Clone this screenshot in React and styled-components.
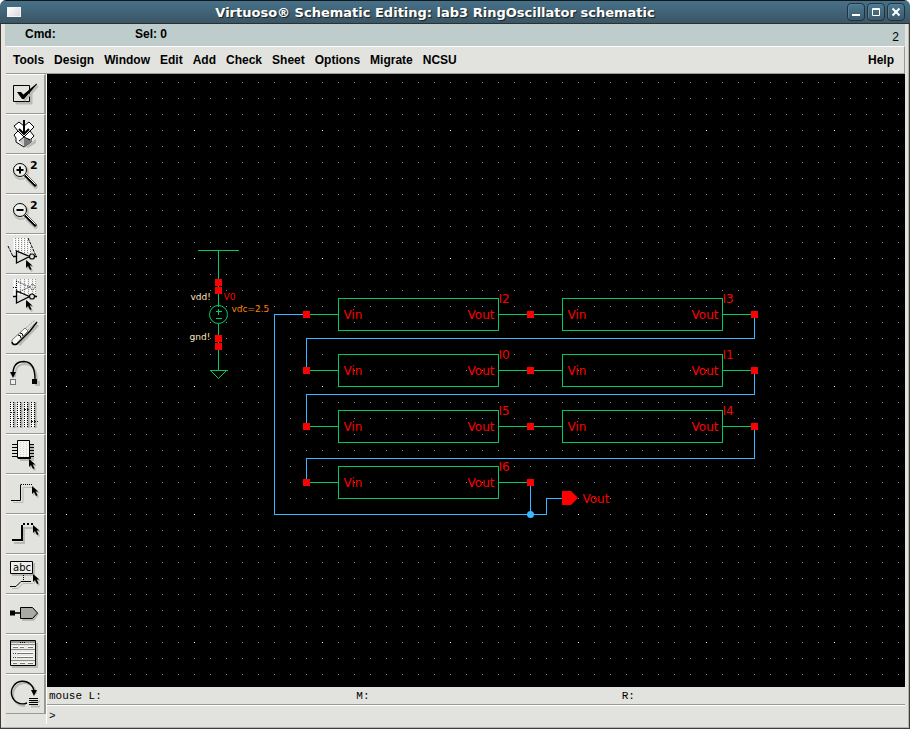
import React from 'react';
import styled, { createGlobalStyle } from 'styled-components';

const GlobalStyle = createGlobalStyle`
  * {
    box-sizing: border-box;
  }
  body {
    margin: 0;
    background: #fff;
    color: #000;
    font-family: "Liberation Sans", Arial, sans-serif;
    font-size: 12px;
  }
`;

const Window = styled.div`
  display: flex;
  flex-direction: column;
  min-height: 100vh;
  background: #e2e3df;
  border-radius: 6px 6px 0 0;
  overflow: hidden;
`;

const TitleBar = styled.header`
  display: flex;
  align-items: center;
  gap: 2px;
  height: 24px;
  padding: 0 5px 0 7px;
  background: linear-gradient(#467189, #3c5563);
  border-top: 1px solid #10181c;
  border-bottom: 1px solid #263238;
`;

const AppIcon = styled.span`
  width: 14px;
  height: 10px;
  background: linear-gradient(135deg, #fff, #d8d8d8);
  border: 1px solid #f4f4f4;
`;

const Title = styled.h1`
  flex: 1;
  margin: 0;
  padding-left: 2px;
  text-align: center;
  color: #fff;
  font: bold 13px "DejaVu Sans", sans-serif;
  white-space: nowrap;
  text-shadow: 1px 1px 1px #182024;
`;

const TitleButton = styled.button`
  width: 18px;
  height: 18px;
  padding: 0;
  border: 1px solid #22313a;
  border-radius: 4px;
  background: linear-gradient(#4b7a93, #3d5a69);
  box-shadow: inset 1px 1px 0 #54849c;
  svg {
    display: block;
  }
`;

const Frame = styled.div`
  flex: 1;
  display: flex;
  flex-direction: column;
  padding: 0 4px 1px;
  border: solid #3c3c3a;
  border-width: 0 1px 1px;
  box-shadow: inset -1px -1px 0 #b4b4b0, inset 4px 0 0 #e9e5e1;
`;

const Banner = styled.div`
  display: flex;
  height: 22px;
  padding: 0 6px 0 20px;
  background: #becccb;
  font-weight: bold;
  line-height: 20px;
`;

const BannerField = styled.span`
  width: 110px;
`;

const WindowNumber = styled.span`
  margin-left: auto;
  font-weight: normal;
  line-height: 26px;
`;

const MenuBar = styled.nav`
  display: flex;
  align-items: center;
  height: 28px;
  margin-left: 1px;
  padding: 0 5px 0 2px;
  border-top: 1px solid #fff;
  border-right: 1px solid #999a95;
  border-bottom: 1px solid #999a95;
`;

const MenuItem = styled.button`
  padding: 0 5px;
  border: none;
  background: none;
  color: inherit;
  font: bold 12px "Liberation Sans", Arial, sans-serif;
  &:last-child {
    margin-left: auto;
  }
`;

const Main = styled.div`
  flex: 1;
  display: flex;
`;

const ToolBar = styled.div`
  flex: none;
  width: 41px;
  margin: 0 0 3px 1px;
  border-right: 1px solid #fff;
`;

const ToolButton = styled.button`
  display: block;
  width: 40px;
  height: 40px;
  padding: 0;
  border: solid #999a95;
  border-width: 1px 2px 1px 0;
  border-top-color: #fff;
  background: #e2e3df;
  svg {
    display: block;
  }
`;

const WorkArea = styled.div`
  flex: 1;
  display: flex;
  flex-direction: column;
  min-width: 0;
`;

const Canvas = styled.svg`
  flex: 1;
  display: block;
  width: 100%;
  min-height: 480px;
  background: #000;
  font: 12px "DejaVu Sans", sans-serif;
`;

const MouseLine = styled.div`
  display: grid;
  grid-template-columns: 308fr 266fr 284fr;
  height: 18px;
  padding-left: 2px;
  border-bottom: 1px solid #999a95;
  font: 11px/18px "Liberation Mono", monospace;
`;

const Prompt = styled.label`
  display: flex;
  height: 22px;
  padding-left: 2px;
  border-top: 1px solid #fff;
  font: 11px/20px "Liberation Mono", monospace;
`;

const PromptInput = styled.input`
  flex: 1;
  min-width: 0;
  padding: 0 4px;
  border: none;
  outline: none;
  background: transparent;
  font: inherit;
`;

const GREEN = '#00cc66';
const BLUE = '#38b8ff';
const RED = '#ff0000';
const SHADE = '#b9bab5';

const MENUS = ['Tools', 'Design', 'Window', 'Edit', 'Add', 'Check', 'Sheet', 'Options', 'Migrate', 'NCSU', 'Help'];

const Cursor = ({ x, y }) => (
  <g transform={`translate(${x} ${y})`}>
    <path d="M1 1v9l2-2 2 4 2-1-2-4h3z" fill={SHADE} />
    <path d="M0 0v8l2-2 2 4 1.6-.8-2-3.6h2.8z" fill="#000" />
  </g>
);

const Lens = ({ plus }) => (
  <>
    <path d="M21 24l10 9" stroke={SHADE} strokeWidth="4" />
    <circle cx="15" cy="17" r="7" stroke={SHADE} strokeWidth="2" fill="none" />
    <circle cx="14" cy="15" r="6.5" stroke="#000" fill="#ecece9" />
    <path d="M9 15a5 5 0 0 1 5-5" stroke="#fff" fill="none" />
    <path d="M19 20l11 11" stroke="#000" strokeWidth="3" />
    <path d="M19.5 19.5l10 10" stroke="#fff" />
    <path d={plus ? 'M10.5 15h7M14 11.5v7' : 'M10.5 15h7'} stroke="#000" strokeWidth="2" />
    <text x="24" y="14" fontSize="11" fontWeight="bold" fontFamily="DejaVu Sans">2</text>
  </>
);

const Inverter = () => (
  <>
    <path d="M10.5 16v12l13-6.5zM7 21.5h3.5M29 21.5h2" stroke="#000" fill="none" strokeWidth="1.3" />
    <circle cx="26" cy="21.5" r="2.5" stroke="#000" fill="#e2e3df" strokeWidth="1.2" />
    <Cursor x={20} y={25} />
  </>
);

const TOOLS = [
  {
    name: 'Check and Save',
    icon: (
      <>
        <path d="M9.5 12.5h17v17h-17z" fill={SHADE} />
        <path d="M7.5 10.5h16v16h-16z" fill="#e2e3df" stroke="#000" />
        <path d="M13 19l6 6 13-14" stroke={SHADE} strokeWidth="2" fill="none" />
        <path d="M11 17h4l2.500 2.500L30.500 8.500l.5 1L18 24h-2z" fill="#000" />
      </>
    ),
  },
  {
    name: 'Save',
    icon: (
      <>
        <path d="M20 32l10-8v4l-8 5z" fill={SHADE} />
        <path d="M13 7l5 4 5-4 5 5-4 4 4 5-3 3v3l-7 5-8-5v-4l-2-3 4-4-4-5z" fill="#fff" stroke="#000" />
        <path d="M18 32v-9l8 1v3z" fill="#777" />
        <path d="M10 24l8 7v-9l-5 4z" fill="#c8c8c4" />
        <path d="M12 16l6 6 6-6M13 26l5-4 6 3" stroke="#000" fill="none" />
        <path d="M18 5v14M13 14l5 5 5-5" stroke="#000" strokeWidth="2" fill="none" />
      </>
    ),
  },
  { name: 'Zoom In by 2', icon: <Lens plus /> },
  { name: 'Zoom Out by 2', icon: <Lens /> },
  {
    name: 'Stretch',
    icon: (
      <>
        <path d="M8.500 3v14M11.500 3v15M14.500 3v15M17.500 3v15M20.500 3v15M23.500 8v10" stroke="#fff" strokeWidth="2" />
        <path d="M9.500 3v14M12.500 3v15M15.500 3v16M18.500 3v16M21.500 5v14M24.500 12v7" stroke="#888" strokeDasharray="1 1" />
        <path d="M2 11l5 10.500M22 3l8 18" stroke="#000" strokeDasharray="3 1" />
        <Inverter />
      </>
    ),
  },
  {
    name: 'Copy',
    icon: (
      <>
        <path d="M8.500 4v18M12.500 4v16M16.500 4v16M20.500 4v16M24.500 4v16M28.500 4v16" stroke="#fff" strokeWidth="2" />
        <path d="M10.500 4v16M14.500 4v16M18.500 4v16M22.500 4v16M26.500 4v16M29.500 4v18" stroke="#999" strokeDasharray="1 1" />
        <path d="M10.500 6v12l13-6zM7 12.500h3M24 12a2.500 2.500 0 1 1 5 0 2.500 2.500 0 1 1-5 0" stroke="#111" strokeDasharray="1 1" fill="none" />
        <Inverter />
      </>
    ),
  },
  {
    name: 'Delete',
    icon: (
      <>
        <path d="M13 30L32 10" stroke={SHADE} strokeWidth="3" />
        <path d="M6 25L19 13l3 3L10 29H6z" fill="#f8f8f6" stroke="#777" />
        <path d="M6 27q1 4 5 2L24 16l7-9" stroke="#000" strokeWidth="1.400" fill="none" />
        <path d="M20 13l9-8M22 15l9-9" stroke="#999" strokeDasharray="2 1" />
        <path d="M12 20q3 0 3 3M14 18q3 0 3 3" stroke="#000" fill="none" />
      </>
    ),
  },
  {
    name: 'Undo',
    icon: (
      <>
        <path d="M9 22Q9 9 19 9 31 10 31 26" stroke={SHADE} strokeWidth="2" fill="none" />
        <path d="M7 19Q7 6.500 18 6.500 29 7 29 24" stroke="#000" strokeWidth="1.400" fill="none" />
        <path d="M4 17h6l-3 6z" fill="#000" />
        <path d="M29 26h5v5h-5z" fill={SHADE} />
        <path d="M26 24h5v5h-5z" fill="#000" />
        <path d="M4.500 24.500h5v5h-5z" stroke="#000" strokeDasharray="1 1" fill="#eee" />
      </>
    ),
  },
  {
    name: 'Property',
    icon: (
      <>
        <path d="M5.500 8v24M12.500 8v24M19.500 8v24M26.500 8v24" stroke="#fff" strokeWidth="2" />
        <path d="M8.500 7v26M15.500 7v26M22.500 7v26M29.500 7v26" stroke="#aaa" strokeWidth="2" />
        <path d="M4.500 7v26M7.500 7v26M11.500 7v26M14.500 7v26M18.500 7v26M21.500 7v26M25.500 7v26M28.500 7v26" stroke="#000" strokeDasharray="1 1" />
        <path d="M4 17.500h6M11 23.500h6M18 14.500h6M25 26.500h7" stroke="#222" strokeDasharray="2 1" />
      </>
    ),
  },
  {
    name: 'Component',
    icon: (
      <>
        <path d="M14 9h14v17H14z" fill={SHADE} />
        <path d="M6 9.500h22M6 12.500h22M6 15.500h22M6 18.500h22M6 21.500h22" stroke="#000" />
        <path d="M11.500 5.500h12v17h-12z" fill="#f4f4f1" stroke="#000" />
        <path d="M11 22h14v2H12z" fill="#000" />
        <path d="M14.500 7v15M17.500 7v15M20.500 7v15" stroke="#d6d6d2" strokeDasharray="1 1" />
        <Cursor x={23} y={24} />
      </>
    ),
  },
  {
    name: 'Wire (narrow)',
    icon: (
      <>
        <path d="M7 27.500h10v-15h9" stroke={SHADE} fill="none" />
        <path d="M5 25.500h9.500v-16" stroke="#000" fill="none" />
        <path d="M15 9.500h12" stroke="#000" strokeDasharray="1 1" />
        <Cursor x={26} y={11} />
      </>
    ),
  },
  {
    name: 'Wire (wide)',
    icon: (
      <>
        <path d="M8 28h10V13h9" stroke={SHADE} fill="none" strokeWidth="2" />
        <path d="M6 25h10V10" stroke="#000" fill="none" strokeWidth="2" />
        <path d="M17 9h10" stroke="#000" strokeWidth="2" strokeDasharray="2 2" />
        <Cursor x={27} y={10} />
      </>
    ),
  },
  {
    name: 'Wire Name',
    icon: (
      <>
        <path d="M6 8h23v13H6z" fill={SHADE} />
        <path d="M4.500 6.500h22v12h-22z" fill="#eeeeeb" stroke="#000" />
        <text x="7" y="16" fontSize="10" fontFamily="DejaVu Sans">abc</text>
        <path d="M17.500 20v6" stroke="#000" strokeDasharray="1 1" />
        <path d="M6 33.500h6l5-5h10" stroke={SHADE} fill="none" />
        <path d="M4 31.500h6l5-5h10" stroke="#000" fill="none" />
        <Cursor x={27} y={19} />
      </>
    ),
  },
  {
    name: 'Pin',
    icon: (
      <>
        <path d="M16 14h12l5 5-5 7H16z" fill={SHADE} />
        <path d="M14.500 12.500h12l5 5.500-5 5.500h-12z" fill="#a9aaa5" stroke="#000" />
        <path d="M4 15.500h5v5H4z" fill="#000" />
        <path d="M9 18h5" stroke="#000" strokeWidth="1.600" />
      </>
    ),
  },
  {
    name: 'Cmd Options',
    icon: (
      <>
        <path d="M6 8h26v25H6z" fill={SHADE} />
        <path d="M4.500 5.500h25v25h-25z" fill="#e9e9e6" stroke="#000" />
        <path d="M5 6h24v2H5z" fill="#999" />
        <path d="M14 7.500h6" stroke="#000" strokeDasharray="1 1" />
        <path d="M5 9.500h24M5 14.500h24M5 25.500h24" stroke="#888" />
        <path d="M7 12.500h5M14 12.500h4M22 12.500h5M11 18.500h16M11 22.500h16M7 28.500h4M14 28.500h5M22 28.500h5" stroke="#777" />
        <path d="M7 11.500h5M14 11.500h4M22 11.500h5M11 17.500h16M11 21.500h16M7 27.500h4M14 27.500h5M22 27.500h5" stroke="#fff" />
        <path d="M7 18.500h3M7 22.500h3" stroke="#444" strokeDasharray="1 1" />
      </>
    ),
  },
  {
    name: 'Repeat',
    icon: (
      <>
        <path d="M19 31A11.500 11.500 0 1 1 30 19" stroke={SHADE} strokeWidth="2" fill="none" />
        <path d="M21 28A11.300 11.300 0 1 1 28 18" stroke="#000" strokeWidth="1.400" fill="none" />
        <path d="M25 15h6l-3 6z" fill="#000" />
        <path d="M25 26.500h9M25 31.500h9" stroke={SHADE} strokeWidth="2" />
        <path d="M23 23.500h9M23 25.500h9M23 27.500h9M23 29.500h9" stroke="#000" />
      </>
    ),
  },
];

// schematic coordinates start at the first grid dot
const BLOCKS = [
  { name: 'I2', x: 288, y: 216 },
  { name: 'I3', x: 512, y: 216 },
  { name: 'I0', x: 288, y: 272 },
  { name: 'I1', x: 512, y: 272 },
  { name: 'I5', x: 288, y: 328 },
  { name: 'I4', x: 512, y: 328 },
  { name: 'I6', x: 288, y: 384 },
];

const WIRES = [
  'M256 232H224V432H496V416H512',
  'M704 232V256H256V288',
  'M704 288V312H256V344',
  'M704 344V376H256V400',
  'M480 400V432',
];

const Pin = ({ x, y }) => <rect x={x - 3.5} y={y - 3.5} width="7" height="7" fill={RED} />;

const Block = ({ name, x, y }) => (
  <g>
    <path
      d={`M${x} ${y}h160v32h-160zM${x - 32} ${y + 16}h32M${x + 160} ${y + 16}h32`}
      stroke={GREEN}
      fill="none"
      shapeRendering="crispEdges"
    />
    <Pin x={x - 32} y={y + 16} />
    <Pin x={x + 192} y={y + 16} />
    <g fill={RED}>
      <text x={x + 5} y={y + 20}>Vin</text>
      <text x={x + 156} y={y + 20} textAnchor="end">Vout</text>
      <text x={x + 160} y={y + 4}>{name}</text>
    </g>
  </g>
);

const Supply = () => (
  <g>
    <g stroke={GREEN} fill="none">
      <path d="M147 168h41M168 168v56M168 241v47M160 288h17M165 229h6M168 226v6M165 236h6" shapeRendering="crispEdges" />
      <circle cx="168" cy="232" r="9" />
      <path d="M160 288l8 8 8-8" />
    </g>
    {[200, 208, 256, 264].map((y) => (
      <Pin key={y} x={168} y={y} />
    ))}
    <g fontSize="9">
      <text x="140" y="217" fill="#ffe6bf">vdd!</text>
      <text x="139" y="257" fill="#ffe6bf">gnd!</text>
      <text x="173" y="217" fill={RED}>V0</text>
      <text x="181" y="229" fill="#ff8000">vdc=2.5</text>
    </g>
  </g>
);

const Schematic = () => (
  <Canvas role="img" aria-label="RingOscillator schematic">
    <defs>
      <pattern id="dots" x="3" y="8" width="16" height="16" patternUnits="userSpaceOnUse">
        <rect width="1" height="1" fill="#8484a0" />
      </pattern>
      <pattern id="majorDots" x="19" y="56" width="128" height="128" patternUnits="userSpaceOnUse">
        <rect width="1" height="1" fill="#fff" />
      </pattern>
    </defs>
    <rect width="100%" height="100%" fill="url(#dots)" />
    <rect width="100%" height="100%" fill="url(#majorDots)" />
    <g transform="translate(3.5 8.5)">
      {WIRES.map((d) => (
        <path key={d} d={d} stroke={BLUE} fill="none" shapeRendering="crispEdges" />
      ))}
      {BLOCKS.map((block) => (
        <Block key={block.name} {...block} />
      ))}
      <Supply />
      <circle cx="480" cy="432" r="3.5" fill={BLUE} />
      <path d="M511.5 408.5h9l7 7-7 7h-9z" fill={RED} />
      <text x="532" y="420" fill={RED}>Vout</text>
    </g>
  </Canvas>
);

const App = () => (
  <>
    <GlobalStyle />
    <Window>
      <TitleBar>
        <AppIcon />
        <Title>Virtuoso® Schematic Editing: lab3 RingOscillator schematic</Title>
        <TitleButton aria-label="Minimize">
          <svg width="16" height="16"><path d="M4 11h8" stroke="#fff" strokeWidth="2" /></svg>
        </TitleButton>
        <TitleButton aria-label="Maximize">
          <svg width="16" height="16"><path d="M4.5 4.5h7v7h-7zM4 5.5h8" stroke="#fff" fill="none" /></svg>
        </TitleButton>
        <TitleButton aria-label="Close">
          <svg width="16" height="16"><path d="M4.5 4.5l7 7M11.5 4.5l-7 7" stroke="#fff" strokeWidth="2" /></svg>
        </TitleButton>
      </TitleBar>
      <Frame>
        <Banner>
          <BannerField>Cmd:</BannerField>
          <BannerField>Sel: 0</BannerField>
          <WindowNumber>2</WindowNumber>
        </Banner>
        <MenuBar>
          {MENUS.map((menu) => (
            <MenuItem key={menu}>{menu}</MenuItem>
          ))}
        </MenuBar>
        <Main>
          <ToolBar>
            {TOOLS.map(({ name, icon }) => (
              <ToolButton key={name} aria-label={name}>
                <svg width="38" height="38">{icon}</svg>
              </ToolButton>
            ))}
          </ToolBar>
          <WorkArea>
            <Schematic />
            <MouseLine>
              <span>mouse L:</span>
              <span>M:</span>
              <span>R:</span>
            </MouseLine>
            <Prompt>
              &gt;
              <PromptInput aria-label="Command" />
            </Prompt>
          </WorkArea>
        </Main>
      </Frame>
    </Window>
  </>
);

export default App;
